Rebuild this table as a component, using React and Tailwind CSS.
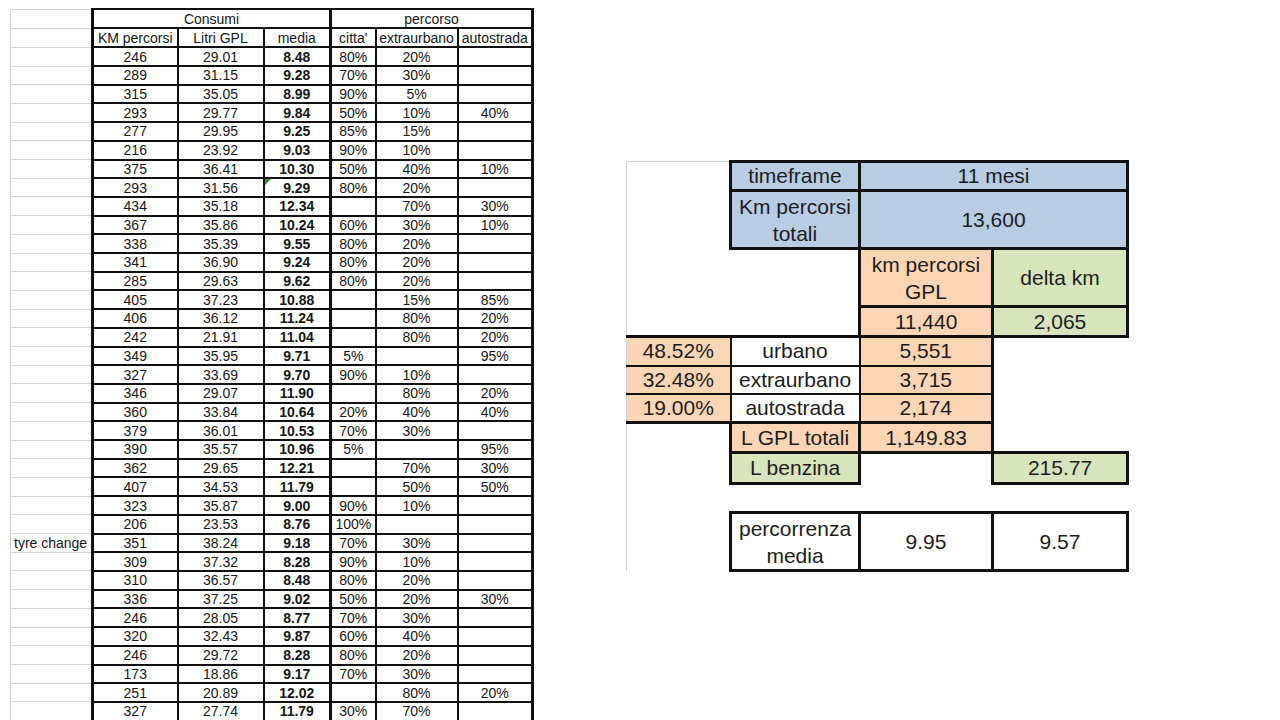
import React from "react";

const rows = [
  ["246", "29.01", "8.48", "80%", "20%", ""],
  ["289", "31.15", "9.28", "70%", "30%", ""],
  ["315", "35.05", "8.99", "90%", "5%", ""],
  ["293", "29.77", "9.84", "50%", "10%", "40%"],
  ["277", "29.95", "9.25", "85%", "15%", ""],
  ["216", "23.92", "9.03", "90%", "10%", ""],
  ["375", "36.41", "10.30", "50%", "40%", "10%"],
  ["293", "31.56", "9.29", "80%", "20%", ""],
  ["434", "35.18", "12.34", "", "70%", "30%"],
  ["367", "35.86", "10.24", "60%", "30%", "10%"],
  ["338", "35.39", "9.55", "80%", "20%", ""],
  ["341", "36.90", "9.24", "80%", "20%", ""],
  ["285", "29.63", "9.62", "80%", "20%", ""],
  ["405", "37.23", "10.88", "", "15%", "85%"],
  ["406", "36.12", "11.24", "", "80%", "20%"],
  ["242", "21.91", "11.04", "", "80%", "20%"],
  ["349", "35.95", "9.71", "5%", "", "95%"],
  ["327", "33.69", "9.70", "90%", "10%", ""],
  ["346", "29.07", "11.90", "", "80%", "20%"],
  ["360", "33.84", "10.64", "20%", "40%", "40%"],
  ["379", "36.01", "10.53", "70%", "30%", ""],
  ["390", "35.57", "10.96", "5%", "", "95%"],
  ["362", "29.65", "12.21", "", "70%", "30%"],
  ["407", "34.53", "11.79", "", "50%", "50%"],
  ["323", "35.87", "9.00", "90%", "10%", ""],
  ["206", "23.53", "8.76", "100%", "", ""],
  ["351", "38.24", "9.18", "70%", "30%", ""],
  ["309", "37.32", "8.28", "90%", "10%", ""],
  ["310", "36.57", "8.48", "80%", "20%", ""],
  ["336", "37.25", "9.02", "50%", "20%", "30%"],
  ["246", "28.05", "8.77", "70%", "30%", ""],
  ["320", "32.43", "9.87", "60%", "40%", ""],
  ["246", "29.72", "8.28", "80%", "20%", ""],
  ["173", "18.86", "9.17", "70%", "30%", ""],
  ["251", "20.89", "12.02", "", "80%", "20%"],
  ["327", "27.74", "11.79", "30%", "70%", ""],
];

const gridCell = "border border-[#d4d4d4] p-0 text-left pl-[3px] whitespace-nowrap";
const c = "border-2 border-[#111] p-0 text-center whitespace-nowrap";

function LeftTable() {
  return (
    <table className="border-collapse table-fixed w-[522px] ml-[10px] mt-[8px] text-[14px] leading-[16px] text-[#161616] shrink-0">
      <colgroup>
        <col className="w-[82px]" />
        <col className="w-[85px]" />
        <col className="w-[86px]" />
        <col className="w-[67px]" />
        <col className="w-[45px]" />
        <col className="w-[82px]" />
        <col className="w-[75px]" />
      </colgroup>
      <tbody>
        <tr className="h-[19.3px]">
          <td className={gridCell}></td>
          <td colSpan={3} className={`${c} border-l-[3px] border-r-[3px]`}>Consumi</td>
          <td colSpan={3} className={`${c} border-r-[3px]`}>percorso</td>
        </tr>
        <tr className="h-[19px]">
          <td className={gridCell}></td>
          <td className={`${c} border-l-[3px]`}>KM percorsi</td>
          <td className={c}>Litri GPL</td>
          <td className={c}>media</td>
          <td className={`${c} border-l-[3px]`}>citta'</td>
          <td className={c}>extraurbano</td>
          <td className={`${c} border-r-[3px]`}>autostrada</td>
        </tr>
        {rows.map((r, i) => (
          <tr key={i} className="h-[18.71px]">
            <td className={gridCell}>{i === 26 ? "tyre change" : ""}</td>
            <td className={`${c} border-l-[3px]`}>{r[0]}</td>
            <td className={c}>{r[1]}</td>
            <td className={`${c} font-bold relative`}>
              {i === 7 && (
                <span className="absolute left-0 top-0 w-0 h-0 border-t-[6px] border-r-[6px] border-t-[#3a8a3a] border-r-transparent" />
              )}
              {r[2]}
            </td>
            <td className={`${c} border-l-[3px]`}>{r[3]}</td>
            <td className={c}>{r[4]}</td>
            <td className={`${c} border-r-[3px]`}>{r[5]}</td>
          </tr>
        ))}
      </tbody>
    </table>
  );
}

const B = "border-[3px] border-[#111] p-0 text-center whitespace-nowrap";
const two = "leading-[27px]";
const blue = "bg-[#b8cce4]";
const peach = "bg-[#fcd5b4]";
const green = "bg-[#d8e4bc]";
const gl = "border-l border-[#d0d0d0] p-0";

function RightTable() {
  return (
    <table className="border-collapse table-fixed w-[501px] ml-[92px] mt-[160px] text-[21px] leading-[22px] text-[#1c1c1c] shrink-0">
      <colgroup>
        <col className="w-[104px]" />
        <col className="w-[129px]" />
        <col className="w-[133px]" />
        <col className="w-[135px]" />
      </colgroup>
      <tbody>
        <tr className="h-[29px]">
          <td className="border-l border-t border-[#d0d0d0] p-0"></td>
          <td className={`${B} ${blue}`}>timeframe</td>
          <td colSpan={2} className={`${B} ${blue}`}>11 mesi</td>
        </tr>
        <tr className="h-[58px]">
          <td className={gl}></td>
          <td className={`${B} ${blue} ${two}`}>Km percorsi<br />totali</td>
          <td colSpan={2} className={`${B} ${blue}`}>13,600</td>
        </tr>
        <tr className="h-[58px]">
          <td className={gl}></td>
          <td className="p-0"></td>
          <td className={`${B} ${peach} ${two}`}>km percorsi<br />GPL</td>
          <td className={`${B} ${green}`}>delta km</td>
        </tr>
        <tr className="h-[30px]">
          <td className={gl}></td>
          <td className="p-0"></td>
          <td className={`${B} ${peach}`}>11,440</td>
          <td className={`${B} ${green}`}>2,065</td>
        </tr>
        {[
          ["48.52%", "urbano", "5,551", "h-[29px]"],
          ["32.48%", "extraurbano", "3,715", "h-[28px]"],
          ["19.00%", "autostrada", "2,174", "h-[29px]"],
        ].map((r, i) => (
          <tr key={i} className={r[3]}>
            <td
              className={`border-2 border-[#111] border-l border-l-[#d0d0d0] p-0 text-center ${peach} ${
                i === 0 ? "border-t-[3px]" : ""
              } ${i === 2 ? "border-b-[3px]" : ""}`}
            >
              {r[0]}
            </td>
            <td
              className={`border-2 border-[#111] p-0 text-center bg-white ${i === 0 ? "border-t-[3px]" : ""} ${
                i === 2 ? "border-b-[3px]" : ""
              }`}
            >
              {r[1]}
            </td>
            <td
              className={`border-2 border-[#111] border-r-[3px] p-0 text-center ${peach} ${
                i === 0 ? "border-t-[3px]" : ""
              } ${i === 2 ? "border-b-[3px]" : ""}`}
            >
              {r[2]}
            </td>
            <td className="p-0"></td>
          </tr>
        ))}
        <tr className="h-[30px]">
          <td className={gl}></td>
          <td className={`${B} ${peach}`}>L GPL totali</td>
          <td className={`${B} ${peach}`}>1,149.83</td>
          <td className="p-0"></td>
        </tr>
        <tr className="h-[31px]">
          <td className={gl}></td>
          <td className={`${B} ${green}`}>L benzina</td>
          <td className="p-0"></td>
          <td className={`${B} ${green}`}>215.77</td>
        </tr>
        <tr className="h-[29px]">
          <td className={gl}></td>
          <td className="p-0"></td>
          <td className="p-0"></td>
          <td className="p-0"></td>
        </tr>
        <tr className="h-[58px]">
          <td className={gl}></td>
          <td className={`${B} bg-white ${two}`}>percorrenza<br />media</td>
          <td className={`${B} bg-white`}>9.95</td>
          <td className={`${B} bg-white`}>9.57</td>
        </tr>
      </tbody>
    </table>
  );
}

export default function App() {
  return (
    <div
      className="w-[1280px] h-[720px] overflow-hidden bg-white flex items-start"
      style={{ fontFamily: '"Liberation Sans", Arial, sans-serif' }}
    >
      <LeftTable />
      <RightTable />
    </div>
  );
}
